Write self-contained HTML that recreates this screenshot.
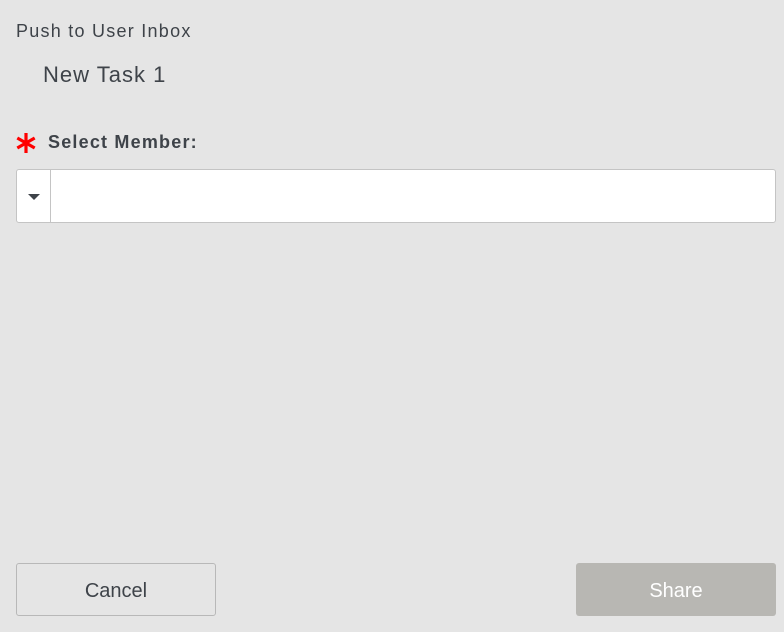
<!DOCTYPE html>
<html><head><meta charset="utf-8"><style>
html,body{margin:0;padding:0;width:784px;height:632px;background:#e5e5e5;font-family:"Liberation Sans",sans-serif;color:#3e4349;overflow:hidden;position:relative}
.t1{position:absolute;left:16px;top:21px;font-size:18px;letter-spacing:1.25px;color:#3e4349}
.t2{position:absolute;left:43px;top:62px;font-size:22px;letter-spacing:1px;color:#3e4349}
.lbl{position:absolute;left:48px;top:132px;font-size:18px;font-weight:bold;letter-spacing:1.2px;color:#3e4349}
.star{position:absolute;left:16px;top:133px}
.sel{position:absolute;left:16px;top:169px;width:758px;height:52px;background:#fff;border:1px solid #c4c4c4;border-radius:3px}
.sel .d{position:absolute;left:0;top:0;width:33px;height:52px;border-right:1px solid #c4c4c4}
.sel .d:after{content:"";position:absolute;left:11px;top:24px;border-left:6px solid transparent;border-right:6px solid transparent;border-top:6px solid #3e4349}
.btn{position:absolute;top:563px;width:198px;height:51px;border-radius:3px;font-size:20px;text-align:center;line-height:55px}
.c{left:16px;border:1px solid #b8b8b8;color:#3e4349}
.s{left:576px;width:200px;height:53px;background:#b8b7b3;color:#fff;line-height:57px}
</style></head><body>
<div class="t1">Push to User Inbox</div>
<div class="t2">New Task 1</div>
<svg class="star" width="20" height="20" viewBox="0 0 20 20"><g stroke="#f00" stroke-width="3.2"><line x1="10" y1="0" x2="10" y2="20"/><line x1="1.3" y1="5" x2="18.7" y2="15"/><line x1="1.3" y1="15" x2="18.7" y2="5"/></g></svg>
<div class="lbl">Select Member:</div>
<div class="sel"><div class="d"></div></div>
<div class="btn c">Cancel</div>
<div class="btn s">Share</div>
</body></html>
